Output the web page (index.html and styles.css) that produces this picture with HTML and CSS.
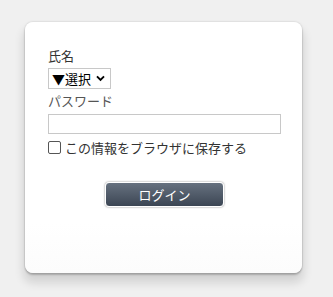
FILE: index.html
```html
<!DOCTYPE html>
<html lang="ja">
<head>
<meta charset="utf-8">
<link rel="stylesheet" href="styles.css">
</head>
<body>
<div class="card">
  <form class="form">
    <label class="label">氏名</label>
    <div class="select">▼選択 <svg class="chev" viewBox="0 0 10 8" width="9" height="7"><path d="M1 1.5 L5 5.5 L9 1.5" fill="none" stroke="#000" stroke-width="2.2"/></svg></div>
    <label class="label pw">パスワード</label>
    <div class="input"></div>
    <div class="remember"><span class="check"></span><span>この情報をブラウザに保存する</span></div>
    <div class="actions"><button type="button" class="btn">ログイン</button></div>
  </form>
</div>
</body>
</html>
```

FILE: styles.css
```css
html, body { margin: 0; padding: 0; }
body {
  background: #f0f0f0;
  width: 333px;
  height: 297px;
  font-family: "Noto Sans CJK JP", "Noto Sans", sans-serif;
  font-size: 13px;
  color: #333;
}
.card {
  position: relative;
  margin: 22px 0 0 25px;
  width: 277px;
  height: 251px;
  box-sizing: border-box;
  background: linear-gradient(#fff 80%, #fcfcfc);
  border-radius: 8px;
  box-shadow: 0 0 2px rgba(0,0,0,0.2), 0 2px 2px rgba(0,0,0,0.2), 0 8px 10px 2px rgba(0,0,0,0.12);
  padding: 24px 22px 0 23px;
}
.form { display: flex; flex-direction: column; align-items: flex-start; }
.label { display: block; line-height: 19px; height: 19px; color: #333; }
.select {
  margin-top: 3px;
  height: 21px;
  box-sizing: border-box;
  border: 1px solid #c8c8c8;
  padding: 0 5px 0 3px;
  display: flex;
  align-items: center;
  gap: 5px;
  color: #000;
  font-size: 13px;
  line-height: 19px;
}
.chev { display: block; }
.pw { margin-top: 2px; color: #555; }
.input {
  margin-top: 4px;
  width: 233px;
  height: 20px;
  box-sizing: border-box;
  border: 1px solid #c8c8c8;
  background: #fff;
}
.remember {
  margin-top: 5px;
  display: flex;
  align-items: center;
  gap: 4px;
  line-height: 17px;
  color: #333;
}
.check {
  width: 13px; height: 13px;
  box-sizing: border-box;
  border: 1px solid #555;
  border-radius: 2px;
  background: #fff;
}
.actions { align-self: stretch; display: flex; justify-content: center; margin-top: 26px; padding-left: 1px; }
.btn {
  width: 119px;
  height: 25px;
  border: 1px solid #fff;
  border-radius: 4px;
  background: linear-gradient(#66717f, #3c4654);
  box-shadow: 0 0 2px rgba(0,0,0,0.5);
  color: #fff;
  font-family: "Noto Sans CJK JP", "Noto Sans", sans-serif;
  font-size: 13px;
  padding: 0;
  line-height: 21px;
}
```
